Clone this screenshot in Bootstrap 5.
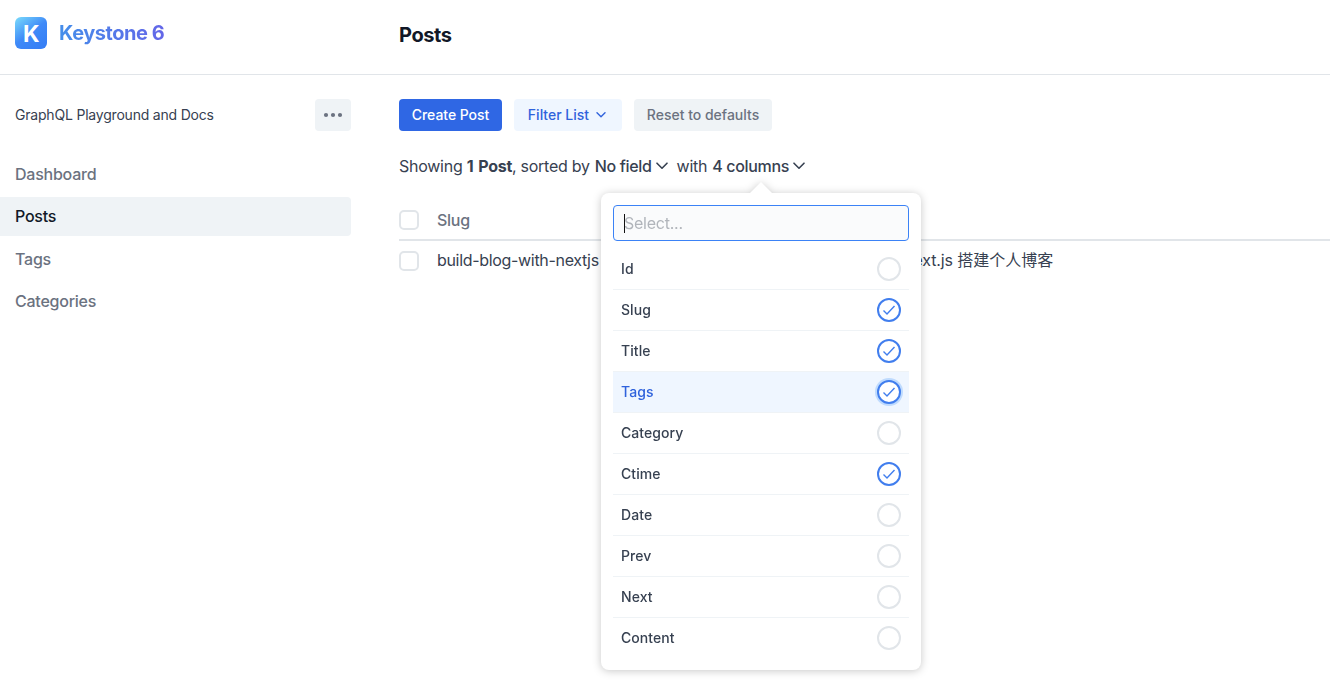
<!DOCTYPE html>
<html lang="en">
<head>
<meta charset="utf-8">
<title>Posts - Keystone 6</title>
<link href="https://cdn.jsdelivr.net/npm/bootstrap@5.3.0/dist/css/bootstrap.min.css" rel="stylesheet">
<style>
body{font-family:Inter,"Noto Sans CJK SC",sans-serif;font-size:16px;line-height:24px;color:#374151;background:#fff;overflow:hidden;height:686px}
.side{width:351px;flex:none}
.topbar{height:75px;border-bottom:1px solid #e1e5e9}
.topbar .side{padding:0 0 8px 15px}
.logo{width:32px;height:32px}
.brand{margin-left:12px;font-size:20px;font-weight:650;letter-spacing:-.45px;background:linear-gradient(90deg,#448eea,#6366e8);-webkit-background-clip:text;background-clip:text;color:transparent}
.heading{font-size:20px;font-weight:700;letter-spacing:-.4px;color:#111827;padding-bottom:5px}
.main-col{margin-left:48px}
.kbtn{--bs-btn-border-radius:4px;--bs-btn-padding-y:0;--bs-btn-padding-x:0;height:32px;border:0;padding-bottom:1px;font-size:14px;font-weight:500;display:flex;align-items:center;justify-content:center}
.kbtn.soft{background:#eff3f6;color:#6b7280}
.kbtn.act{background:#2f67e4;color:#fff;letter-spacing:-.05px}
.kbtn.tone{background:#eff6ff;color:#2f62dc}
.kbtn.more{width:36px;padding:0}
.docs{font-size:14px;letter-spacing:-.2px}
.side .nav-link{height:39px;padding:0 15px;display:flex;align-items:center;font-weight:500;letter-spacing:-.24px;color:#6b7280;border-radius:0 4px 4px 0}
.side .nav-link.active{background:#eff3f6;color:#111827}
.side .nav{gap:3.4px;margin-top:23.5px}
.box{width:20px;height:20px;border:2px solid #e1e5e9;border-radius:5px;flex:none}
.summary{margin-top:23px}
.summary .plain{letter-spacing:-.26px}
.summary b{font-weight:700;letter-spacing:-.3px;word-spacing:1.5px}
.summary .pick{margin-left:5px;font-weight:500;letter-spacing:-.33px}
.summary svg{margin-left:4px}
.thead-line{height:41px;margin-top:22px;border-bottom:2px solid #e1e5e9}
.trow{height:40px}
.cell{margin-left:18px}
.trow .cell{width:464.500px;letter-spacing:-.32px}
.trow .txt{padding-bottom:2px}
.latin{letter-spacing:-.12px}
.pop{left:601px;top:193px;width:320px;height:477px;padding:12px;background:#fff;border-radius:8px;filter:drop-shadow(0 1px 4px rgba(0,0,0,.22))}
.pop::before{content:"";position:absolute;left:148px;top:-11px;border:12px solid transparent;border-top:0;border-bottom:12px solid #fff}
.search{height:36px;border:1px solid #3b82f6;border-radius:4px;background:#fafbfc;color:#b1b5bb;padding-left:10px}
.search span+span{letter-spacing:-.25px;margin-left:-1px}
.caret{width:1px;height:19px;background:#111}
.opts{margin-top:8px}
.opt{height:41px;padding:0 8px;border-bottom:1px solid #eff3f6;font-size:14px;font-weight:500;letter-spacing:.07px}
.opt:last-child{border:0;height:40px}
.opt.hot{background:#eff6ff;color:#2f62dc}
.ring{width:24px;height:24px;border:2px solid #e1e5e9;border-radius:50%;background:#fff}
.ring.on{border-color:#417eee}
.hot .ring{box-shadow:0 0 0 2px #bfdbfe}
svg{display:block;flex:none}
</style>
</head>
<body>
<header class="topbar d-flex">
  <div class="side d-flex align-items-center">
    <svg class="logo" viewBox="0 0 32 32"><defs><linearGradient id="lg" x1="0" y1="0" x2=".75" y2="1"><stop offset="0" stop-color="#7bdcfb"/><stop offset=".55" stop-color="#3f8af8"/><stop offset="1" stop-color="#367ff5"/></linearGradient></defs><rect width="32" height="32" rx="6" fill="url(#lg)"/><text x="16.300" y="25" text-anchor="middle" font-family="Inter, sans-serif" font-weight="700" font-size="23" fill="#fff">K</text></svg>
    <span class="brand">Keystone 6</span>
  </div>
  <h1 class="heading main-col mb-0 d-flex align-items-center">Posts</h1>
</header>
<div class="d-flex">
  <aside class="side">
    <div class="d-flex justify-content-between align-items-center" style="padding:24px 0 0 15px">
      <span class="docs">GraphQL Playground and Docs</span>
      <button class="btn kbtn soft more"><svg width="20" height="6" fill="#6b7280"><circle cx="3" cy="3" r="2.100"/><circle cx="10" cy="3" r="2.100"/><circle cx="17" cy="3" r="2.100"/></svg></button>
    </div>
    <nav class="nav flex-column flex-nowrap">
      <a class="nav-link">Dashboard</a>
      <a class="nav-link active">Posts</a>
      <a class="nav-link">Tags</a>
      <a class="nav-link">Categories</a>
    </nav>
  </aside>
  <main class="main-col flex-grow-1 pt-4">
    <div class="d-flex" style="gap:12px">
      <button class="btn kbtn act" style="width:103px">Create Post</button>
      <button class="btn kbtn tone" style="width:108px;padding-right:2px">Filter List<svg width="10" height="6" viewBox="0 0 10 6" fill="none" stroke="currentColor" stroke-width="1.400" stroke-linecap="round" stroke-linejoin="round" style="margin-left:7px"><path d="M1 .8l4 4 4-4"/></svg></button>
      <button class="btn kbtn soft" style="width:138px">Reset to defaults</button>
    </div>
    <div class="summary d-flex align-items-center text-nowrap">
      <span class="plain">Showing <b>1 Post</b>, sorted by</span>
      <span class="pick">No field</span>
      <svg width="12" height="8" viewBox="0 0 12 8" fill="none" stroke="currentColor" stroke-width="1.600" stroke-linecap="round" stroke-linejoin="round"><path d="M1 1.200l5 5 5-5"/></svg>
      <span class="plain" style="margin-left:9px">with</span>
      <span class="pick">4 columns</span>
      <svg width="12" height="8" viewBox="0 0 12 8" fill="none" stroke="currentColor" stroke-width="1.600" stroke-linecap="round" stroke-linejoin="round"><path d="M1 1.200l5 5 5-5"/></svg>
    </div>
    <div class="thead-line d-flex align-items-center">
      <span class="box"></span><span class="cell" style="font-weight:500;color:#6b7280;letter-spacing:-.25px">Slug</span>
    </div>
    <div class="trow d-flex align-items-center text-nowrap">
      <span class="box"></span><span class="cell txt">build-blog-with-nextjs</span><span class="txt"><span class="latin">Next.js </span>搭建个人博客</span>
    </div>
  </main>
</div>
<div class="pop position-absolute">
  <div class="search d-flex align-items-center"><span class="caret"></span><span>Select...</span></div>
  <div class="opts">
    <div class="opt d-flex align-items-center justify-content-between">Id<span class="ring"></span></div>
    <div class="opt d-flex align-items-center justify-content-between">Slug<span class="ring on"><svg width="20" height="20" fill="none" stroke="#417eee" stroke-width="1.400"><path d="M4.500 10.500l3.500 3.500 7.500-8"/></svg></span></div>
    <div class="opt d-flex align-items-center justify-content-between">Title<span class="ring on"><svg width="20" height="20" fill="none" stroke="#417eee" stroke-width="1.400"><path d="M4.500 10.500l3.500 3.500 7.500-8"/></svg></span></div>
    <div class="opt hot d-flex align-items-center justify-content-between">Tags<span class="ring on"><svg width="20" height="20" fill="none" stroke="#417eee" stroke-width="1.400"><path d="M4.500 10.500l3.500 3.500 7.500-8"/></svg></span></div>
    <div class="opt d-flex align-items-center justify-content-between">Category<span class="ring"></span></div>
    <div class="opt d-flex align-items-center justify-content-between">Ctime<span class="ring on"><svg width="20" height="20" fill="none" stroke="#417eee" stroke-width="1.400"><path d="M4.500 10.500l3.500 3.500 7.500-8"/></svg></span></div>
    <div class="opt d-flex align-items-center justify-content-between">Date<span class="ring"></span></div>
    <div class="opt d-flex align-items-center justify-content-between">Prev<span class="ring"></span></div>
    <div class="opt d-flex align-items-center justify-content-between">Next<span class="ring"></span></div>
    <div class="opt d-flex align-items-center justify-content-between">Content<span class="ring"></span></div>
  </div>
</div>
<script src="https://cdn.jsdelivr.net/npm/bootstrap@5.3.0/dist/js/bootstrap.bundle.min.js"></script>
</body>
</html>
